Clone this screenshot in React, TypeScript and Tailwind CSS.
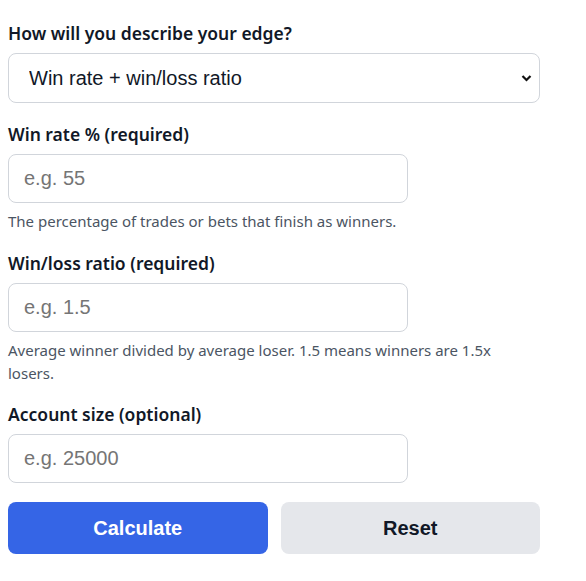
import React from "react";

const labelCls = "block text-[17.5px] font-semibold text-[#111827] mb-2 leading-[24px]";
const inputCls =
  "block w-[400px] h-[49px] rounded-lg border border-[#d1d5db] bg-white px-[15px] text-[20px] text-[#111827] placeholder:text-[#757575] outline-none";
const helpCls = "mt-[7px] text-[15px] leading-[23px] text-[#4b5563]";

const App = () => {
  return (
    <div className="bg-white w-[586px] h-[581px] px-2 pt-[21px]" style={{ fontFamily: '"Noto Sans", sans-serif' }}>
      <label className={labelCls}>How will you describe your edge?</label>
      <div className="relative w-[532px]">
        <select
          className="block w-full h-[50px] rounded-lg border border-[#d1d5db] bg-white pl-[20px] text-[20px] text-[#111827] appearance-none outline-none"
          style={{ fontFamily: '"Liberation Sans", Arial, sans-serif' }}
          defaultValue="wr"
        >
          <option value="wr">Win rate + win/loss ratio</option>
        </select>
        <svg
          className="absolute right-[8px] top-[21px] pointer-events-none"
          width="11"
          height="8"
          viewBox="0 0 11 8"
        >
          <path d="M1.5 2 L5.5 6 L9.5 2" fill="none" stroke="#111" strokeWidth="2.2" />
        </svg>
      </div>

      <label className={`${labelCls} mt-[19px]`}>Win rate % (required)</label>
      <input className={inputCls} placeholder="e.g. 55" style={{ fontFamily: '"Liberation Sans", Arial, sans-serif' }} />
      <p className={helpCls}>The percentage of trades or bets that finish as winners.</p>

      <label className={`${labelCls} mt-[18px]`}>Win/loss ratio (required)</label>
      <input className={inputCls} placeholder="e.g. 1.5" style={{ fontFamily: '"Liberation Sans", Arial, sans-serif' }} />
      <p className={`${helpCls} w-[500px]`}>
        Average winner divided by average loser. 1.5 means winners are 1.5x losers.
      </p>

      <label className={`${labelCls} mt-[17px]`}>Account size (optional)</label>
      <input className={inputCls} placeholder="e.g. 25000" style={{ fontFamily: '"Liberation Sans", Arial, sans-serif' }} />

      <div
        className="grid grid-cols-2 gap-[13px] w-[532px] mt-[19px]"
        style={{ fontFamily: '"Liberation Sans", Arial, sans-serif' }}
      >
        <button className="h-[52px] rounded-lg bg-[#3565e6] text-white text-[20px] font-bold">Calculate</button>
        <button className="h-[52px] rounded-lg bg-[#e5e7eb] text-[#111827] text-[20px] font-bold">Reset</button>
      </div>
    </div>
  );
};

export default App;
